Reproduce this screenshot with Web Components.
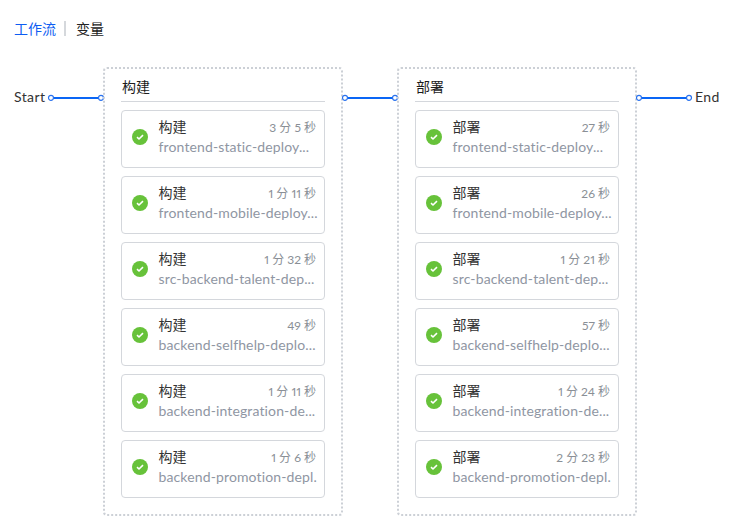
<!DOCTYPE html>
<html lang="zh">
<head>
<meta charset="utf-8">
<title>工作流</title>
<style>
    html, body { margin: 0; background: #fff; }
    body { font-family: "Lato", "Noto Sans CJK SC", sans-serif; }
</style>
</head>
<body>
<flow-page>
    <flow-tabs slot="tabs"></flow-tabs>
    <flow-label>Start</flow-label>
    <flow-link></flow-link>
    <flow-stage title="构建">
        <job-card name="构建" time="3 分 5 秒" job="frontend-static-deploy..."></job-card>
        <job-card name="构建" time="1 分 11 秒" job="frontend-mobile-deploy..."></job-card>
        <job-card name="构建" time="1 分 32 秒" job="src-backend-talent-dep..."></job-card>
        <job-card name="构建" time="49 秒" job="backend-selfhelp-deplo..."></job-card>
        <job-card name="构建" time="1 分 11 秒" job="backend-integration-de..."></job-card>
        <job-card name="构建" time="1 分 6 秒" job="backend-promotion-depl."></job-card>
    </flow-stage>
    <flow-link></flow-link>
    <flow-stage title="部署">
        <job-card name="部署" time="27 秒" job="frontend-static-deploy..."></job-card>
        <job-card name="部署" time="26 秒" job="frontend-mobile-deploy..."></job-card>
        <job-card name="部署" time="1 分 21 秒" job="src-backend-talent-dep..."></job-card>
        <job-card name="部署" time="57 秒" job="backend-selfhelp-deplo..."></job-card>
        <job-card name="部署" time="1 分 24 秒" job="backend-integration-de..."></job-card>
        <job-card name="部署" time="2 分 23 秒" job="backend-promotion-depl."></job-card>
    </flow-stage>
    <flow-link></flow-link>
    <flow-label>End</flow-label>
</flow-page>
<script>
class FlowPage extends HTMLElement {
    constructor() {
        super();
        this.attachShadow({ mode: "open" });
        this.shadowRoot.innerHTML = `
            <style>
                :host { display: block; padding: 17px 0 0 10px; }
                .flow { display: flex; align-items: flex-start; margin-top: 28px; }
            </style>
            <slot name="tabs"></slot>
            <div class="flow"><slot></slot></div>
        `;
    }
}

class FlowTabs extends HTMLElement {
    constructor() {
        super();
        this.attachShadow({ mode: "open" });
        this.shadowRoot.innerHTML = `
            <style>
                :host { display: flex; align-items: center; height: 22px; padding-left: 4px; font-size: 14px; color: #222; }
                .active { color: #0d5cf2; }
                .sep { width: 2px; height: 15px; background: #d5d8dc; margin: 0 10px 0 8px; }
            </style>
            <span class="active">工作流</span><span class="sep"></span><span>变量</span>
        `;
    }
}

class FlowLabel extends HTMLElement {
    constructor() {
        super();
        this.attachShadow({ mode: "open" });
        this.shadowRoot.innerHTML = `
            <style>
                :host {
                    display: block;
                    flex: none;
                    width: 32px;
                    height: 20px;
                    line-height: 20px;
                    margin-top: 20px;
                    padding: 0 3px 0 4px;
                    font-size: 14px;
                    letter-spacing: 0.4px;
                    color: #333;
                }
            </style>
            <slot></slot>
        `;
    }
}

class FlowLink extends HTMLElement {
    constructor() {
        super();
        this.attachShadow({ mode: "open" });
        this.shadowRoot.innerHTML = `
            <style>
                :host { display: block; width: 54px; height: 8px; margin-top: 27px; flex: none; }
                svg { display: block; overflow: visible; }
            </style>
            <svg width="54" height="8" viewBox="0 0 54 8">
                <line x1="2" y1="4" x2="52" y2="4" stroke="#0a66f5" stroke-width="2"/>
                <circle cx="2" cy="3.8" r="2.5" fill="#fff" stroke="#2a72ee" stroke-width="1.2"/>
                <circle cx="52" cy="3.8" r="2.5" fill="#fff" stroke="#2a72ee" stroke-width="1.2"/>
            </svg>
        `;
    }
}

class FlowStage extends HTMLElement {
    constructor() {
        super();
        this.attachShadow({ mode: "open" });
        this.shadowRoot.innerHTML = `
            <style>
                :host {
                    display: block;
                    flex: none;
                    box-sizing: border-box;
                    width: 240px;
                    height: 449px;
                    padding: 8px 16px 0;
                    border: 2px dotted #ccd0d6;
                    border-radius: 4px;
                }
                .title {
                    height: 24px;
                    line-height: 19px;
                    padding-left: 1px;
                    margin-bottom: 8px;
                    font-size: 14px;
                    color: #1c1c1c;
                    border-bottom: 1px solid #d4d7dc;
                }
                .jobs { display: flex; flex-direction: column; gap: 8px; }
            </style>
            <div class="title"></div>
            <div class="jobs"><slot></slot></div>
        `;
    }

    connectedCallback() {
        this.shadowRoot.querySelector(".title").textContent = this.getAttribute("title");
    }
}

class JobCard extends HTMLElement {
    constructor() {
        super();
        this.attachShadow({ mode: "open" });
        this.shadowRoot.innerHTML = `
            <style>
                :host {
                    display: flex;
                    align-items: center;
                    box-sizing: border-box;
                    height: 58px;
                    padding: 0 8px 0 9.5px;
                    border: 1px solid #d4d7dc;
                    border-radius: 4px;
                    background: #fff;
                }
                svg { flex: none; display: block; margin: 0 11px 4px 0; }
                .body { flex: 1; min-width: 0; margin-bottom: 5px; }
                .top { display: flex; justify-content: space-between; align-items: center; height: 18px; margin-bottom: 2px; }
                .name { font-size: 14px; color: #333; }
                .time { margin-top: 1px; font-size: 12px; color: #8a8f96; font-variant-numeric: proportional-nums; }
                .job { height: 20px; line-height: 20px; font-size: 14px; letter-spacing: 0.13px; color: #8f96a3; white-space: nowrap; }
            </style>
            <svg width="16" height="16" viewBox="0 0 16 16">
                <circle cx="8" cy="8" r="8" fill="#67c23a"/>
                <path d="M5 8.2 7 10 11 6.2" fill="none" stroke="#fff" stroke-width="1.6"/>
            </svg>
            <div class="body">
                <div class="top"><span class="name"></span><span class="time"></span></div>
                <div class="job"></div>
            </div>
        `;
    }

    connectedCallback() {
        this.shadowRoot.querySelector(".name").textContent = this.getAttribute("name");
        this.shadowRoot.querySelector(".time").textContent = this.getAttribute("time");
        this.shadowRoot.querySelector(".job").textContent = this.getAttribute("job");
    }
}

customElements.define("flow-page", FlowPage);
customElements.define("flow-tabs", FlowTabs);
customElements.define("flow-label", FlowLabel);
customElements.define("flow-link", FlowLink);
customElements.define("flow-stage", FlowStage);
customElements.define("job-card", JobCard);
</script>
</body>
</html>
